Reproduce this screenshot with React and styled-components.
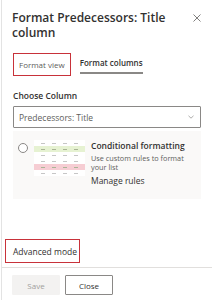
import React from 'react'
import styled, { createGlobalStyle } from 'styled-components'

const Global = createGlobalStyle`
  html, body { margin: 0; padding: 0; background: #fff; }
  body { font-family: "Open Sans", "Noto Sans", sans-serif; color: #323130; }
`

const Panel = styled.div`
  width: 211px;
  height: 300px;
  margin-left: 1px;
  border-left: 1px solid #e3e3e3;
  box-sizing: border-box;
  display: flex;
  flex-direction: column;
  overflow: hidden;
`

const Header = styled.div`
  display: flex;
  justify-content: space-between;
  align-items: flex-start;
  padding: 10px 10px 0 10px;
`

const Title = styled.div`
  font-size: 12px;
  font-weight: 600;
  line-height: 15px;
  width: 160px;
`

const CloseX = styled.svg`
  width: 8px;
  height: 8px;
  margin-top: 4px;
  margin-right: 1px;
`

const Tabs = styled.div`
  display: flex;
  align-items: stretch;
  gap: 9px;
  margin: 13px 0 0 11px;
  height: 23px;
`

const Tab = styled.div`
  display: flex;
  align-items: center;
  box-sizing: border-box;
  font-size: 8px;
  padding: 0 ${p => (p.$boxed ? '5px' : '0')};
  color: ${p => (p.$active ? '#323130' : '#605e5c')};
  font-weight: ${p => (p.$active ? 600 : 400)};
  border: ${p => (p.$boxed ? '1px solid #c8323a' : 'none')};
  border-bottom: ${p => (p.$active ? '2px solid #8a8886' : p.$boxed ? '1px solid #c8323a' : 'none')};
  height: ${p => (p.$active ? '21px' : '23px')};
`

const Section = styled.div`
  padding: 0 11px 0 11px;
  margin-top: 14px;
`

const Label = styled.div`
  font-size: 8.5px;
  font-weight: 600;
  line-height: 12px;
`

const Dropdown = styled.div`
  margin-top: 4px;
  height: 22px;
  border: 1px solid #8a8886;
  border-radius: 1px;
  box-sizing: border-box;
  display: flex;
  align-items: center;
  justify-content: space-between;
  padding: 0 6px 0 5px;
  font-size: 8.5px;
  color: #605e5c;
`

const Card = styled.div`
  margin-top: 3px;
  height: 68px;
  background: #faf9f8;
  display: flex;
  align-items: flex-start;
  padding: 9px 0 0 5px;
  box-sizing: border-box;
`

const Radio = styled.div`
  width: 10px;
  height: 10px;
  border: 1px solid #8a8886;
  border-radius: 50%;
  box-sizing: border-box;
  background: #fff;
  margin-top: 3px;
  flex-shrink: 0;
`

const MiniTable = styled.div`
  width: 51px;
  margin: 0 6px 0 6px;
  background: #fff;
  display: flex;
  flex-direction: column;
  flex-shrink: 0;
`

const MiniRow = styled.div`
  height: 6px;
  background: ${p => p.$bg || '#fff'};
  display: flex;
  justify-content: space-around;
  align-items: center;
  padding: 0 3px;
  span {
    width: 4px;
    height: 1px;
    background: ${p => (p.$bg ? '#a9b596' : '#c6c6c6')};
  }
`

const CardText = styled.div`
  display: flex;
  flex-direction: column;
`

const CardTitle = styled.div`
  font-size: 8.5px;
  font-weight: 600;
  line-height: 12px;
`

const CardDesc = styled.div`
  font-size: 7.3px;
  color: #605e5c;
  line-height: 9px;
  margin-top: 2px;
  width: 95px;
`

const CardLink = styled.div`
  font-size: 8.5px;
  line-height: 12px;
  margin-top: 3px;
`

const Spacer = styled.div`
  flex: 1;
`

const Advanced = styled.div`
  margin-left: 3px;
  width: 75px;
  height: 24px;
  box-sizing: border-box;
  border: 1px solid #c8323a;
  display: flex;
  align-items: center;
  padding-left: 7px;
  font-size: 8.5px;
`

const Footer = styled.div`
  margin-top: 4px;
  border-top: 1px solid #e1dfdd;
  padding: 7px 10px 5px 10px;
  display: flex;
  gap: 5px;
`

const Button = styled.div`
  width: 48px;
  height: 20px;
  box-sizing: border-box;
  display: flex;
  align-items: center;
  justify-content: center;
  font-size: 8px;
  background: ${p => (p.$disabled ? '#f3f2f1' : '#fff')};
  color: ${p => (p.$disabled ? '#a19f9d' : '#323130')};
  border: 1px solid ${p => (p.$disabled ? '#f3f2f1' : '#8a8886')};
  border-radius: 1px;
`

const mini = [null, '#e6f2d2', null, null, '#f6cdd3', null]

const App = () => {
  return (
    <>
      <Global />
      <Panel>
        <Header>
          <Title>Format Predecessors: Title column</Title>
          <CloseX viewBox="0 0 8 8">
            <path d="M0.5 0.5 L7.5 7.5 M7.5 0.5 L0.5 7.5" stroke="#605e5c" strokeWidth="0.8" />
          </CloseX>
        </Header>
        <Tabs>
          <Tab $boxed>Format view</Tab>
          <Tab $active>Format columns</Tab>
        </Tabs>
        <Section>
          <Label>Choose Column</Label>
          <Dropdown>
            <span>Predecessors: Title</span>
            <svg width="6" height="4" viewBox="0 0 6 4">
              <path d="M0.5 0.8 L3 3.2 L5.5 0.8" fill="none" stroke="#8a8886" strokeWidth="0.7" />
            </svg>
          </Dropdown>
          <Card>
            <Radio />
            <MiniTable>
              {mini.map((bg, i) => (
                <MiniRow key={i} $bg={bg}>
                  <span /><span /><span /><span />
                </MiniRow>
              ))}
            </MiniTable>
            <CardText>
              <CardTitle>Conditional formatting</CardTitle>
              <CardDesc>Use custom rules to format your list</CardDesc>
              <CardLink>Manage rules</CardLink>
            </CardText>
          </Card>
        </Section>
        <Spacer />
        <Advanced>Advanced mode</Advanced>
        <Footer>
          <Button $disabled>Save</Button>
          <Button>Close</Button>
        </Footer>
      </Panel>
    </>
  )
}

export default App
